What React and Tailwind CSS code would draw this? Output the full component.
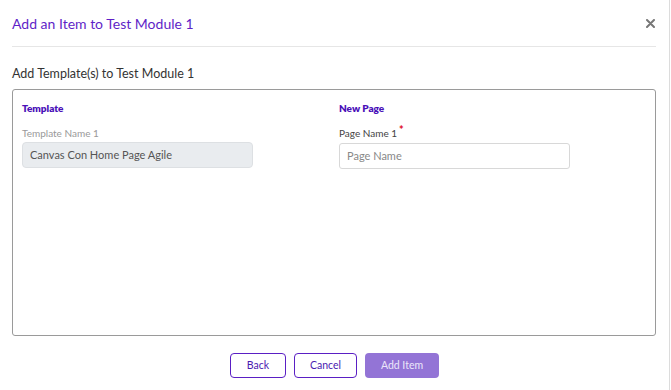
export default function App() {
  return (
    <div className="w-[671px] h-[390px] bg-white" style={{ fontFamily: "Lato, 'Noto Sans', sans-serif" }}>
      <div className="w-[670px] h-[390px] border-r border-[#dcdcdc] pl-[12px] pr-[13px] flex flex-col">
        <div className="h-[46px] flex items-center justify-between">
          <div className="text-[14px] text-[#5f1fc7] leading-none mt-[1px]">Add an Item to Test Module 1</div>
          <svg width="9" height="9" viewBox="0 0 9 9" className="mr-[1px] mt-[1px]">
            <path d="M1 1L8 8M8 1L1 8" stroke="#777" strokeWidth="2" strokeLinecap="round" />
          </svg>
        </div>
        <div className="h-px bg-[#e6e6e6]" />
        <div className="mt-[20px] h-[14px] text-[12.5px] leading-[14px] text-[#333]">Add Template(s) to Test Module 1</div>
        <div className="mt-[8px] h-[247px] border border-[#9a9a9a] rounded-[3px] px-[9px] pt-[12px] flex">
          <div className="w-[317px] flex flex-col">
            <div className="text-[10px] font-extrabold text-[#4a10b8] leading-[12px]">Template</div>
            <div className="mt-[13px] text-[10px] text-[#999] leading-[12px]">Template Name 1</div>
            <div className="mt-[3px] w-[231px] h-[26px] bg-[#e9ecef] border border-[#dde0e3] rounded-[4px] flex items-center px-[7px] text-[11px] text-[#555]">
              Canvas Con Home Page Agile
            </div>
          </div>
          <div className="flex flex-col">
            <div className="text-[10px] font-extrabold text-[#4a10b8] leading-[12px]">New Page</div>
            <div className="mt-[13px] text-[10px] text-[#444] leading-[12px] flex items-start">
              Page Name 1<span className="text-[#e0102a] text-[11px] leading-[8px] ml-[2px] -mt-[1px] font-black">*</span>
            </div>
            <div className="mt-[4px] w-[231px] h-[26px] bg-white border border-[#d8d8d8] rounded-[3px] flex items-center px-[7px] text-[11px] text-[#888]">
              Page Name
            </div>
          </div>
        </div>
        <div className="mt-[17px] flex justify-center gap-[8px] pl-[1px]">
          <button className="w-[56px] h-[25px] border-[1.5px] border-[#5a1fc4] rounded-[4px] text-[10.5px] text-[#4a1ab0] bg-white">Back</button>
          <button className="w-[63px] h-[25px] border-[1.5px] border-[#5a1fc4] rounded-[4px] text-[10.5px] text-[#4a1ab0] bg-white">Cancel</button>
          <button className="w-[74px] h-[25px] rounded-[4px] text-[10.5px] text-[#ece6fa] bg-[#9374d6]">Add Item</button>
        </div>
      </div>
    </div>
  );
}
